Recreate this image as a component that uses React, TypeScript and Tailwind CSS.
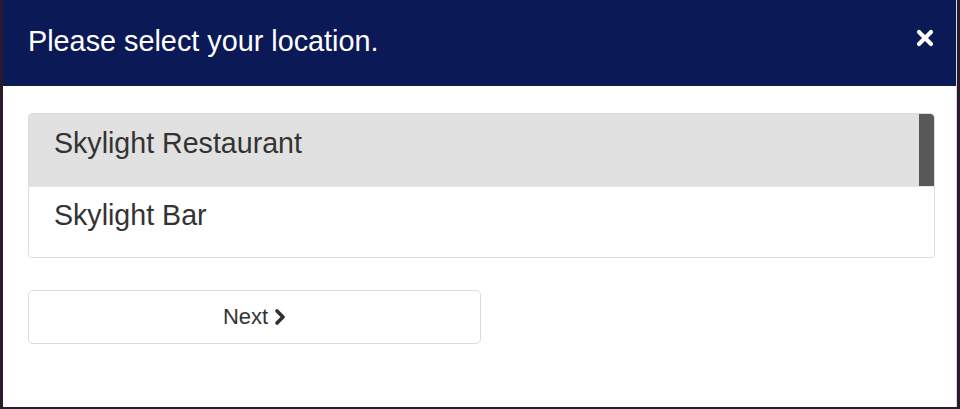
import React from "react";

export default function App() {
  const font = { fontFamily: '"Liberation Sans", Arial, sans-serif' };
  return (
    <div
      className="w-[960px] h-[409px] bg-[#2a1b2c] pl-[3px] pr-[3px] pb-[2px] overflow-hidden"
      style={font}
    >
      <div className="h-full bg-white flex flex-col border-r border-[#d8d8d8]">
        <div className="h-[86px] bg-[#0b1a57] flex items-center justify-between pl-[25px] pr-[22px] shrink-0">
          <h1 className="text-white text-[28.8px] leading-none font-normal pb-[4px]">
            Please select your location.
          </h1>
          <svg width="18" height="18" viewBox="0 0 18 18" className="mb-[10px]">
            <path
              d="M3 3 L15 15 M15 3 L3 15"
              stroke="#ffffff"
              strokeWidth="4.2"
              strokeLinecap="round"
            />
          </svg>
        </div>
        <div className="pl-[25px] pr-[21px] pt-[27px]">
          <div className="relative border border-[#dcdcdc] rounded-[4px] overflow-hidden">
            <div className="h-[72px] bg-[#e1e1e1] flex items-center pl-[25px] pb-[14px] text-[#333] text-[28.6px]">
              Skylight Restaurant
            </div>
            <div className="h-[71px] bg-white flex items-center pl-[25px] pb-[14px] text-[#333] text-[28.6px] border-t border-[#e6e6e6]">
              Skylight Bar
            </div>
            <div className="absolute right-0 top-0 w-[15px] h-[72px] bg-[#585858] rounded-tr-[4px]" />
          </div>
          <button className="mt-[32px] w-[453px] h-[54px] border border-[#dcdcdc] rounded-[5px] bg-white flex items-center justify-center gap-[6px] text-[#333] text-[22px] pb-[2px]">
            <span>Next</span>
            <svg width="12" height="18" viewBox="0 0 12 18" className="mt-[1px]">
              <polyline
                points="3,3 9,9 3,15"
                fill="none"
                stroke="#2f2f2f"
                strokeWidth="3.6"
                strokeLinecap="round"
                strokeLinejoin="round"
              />
            </svg>
          </button>
        </div>
      </div>
    </div>
  );
}
